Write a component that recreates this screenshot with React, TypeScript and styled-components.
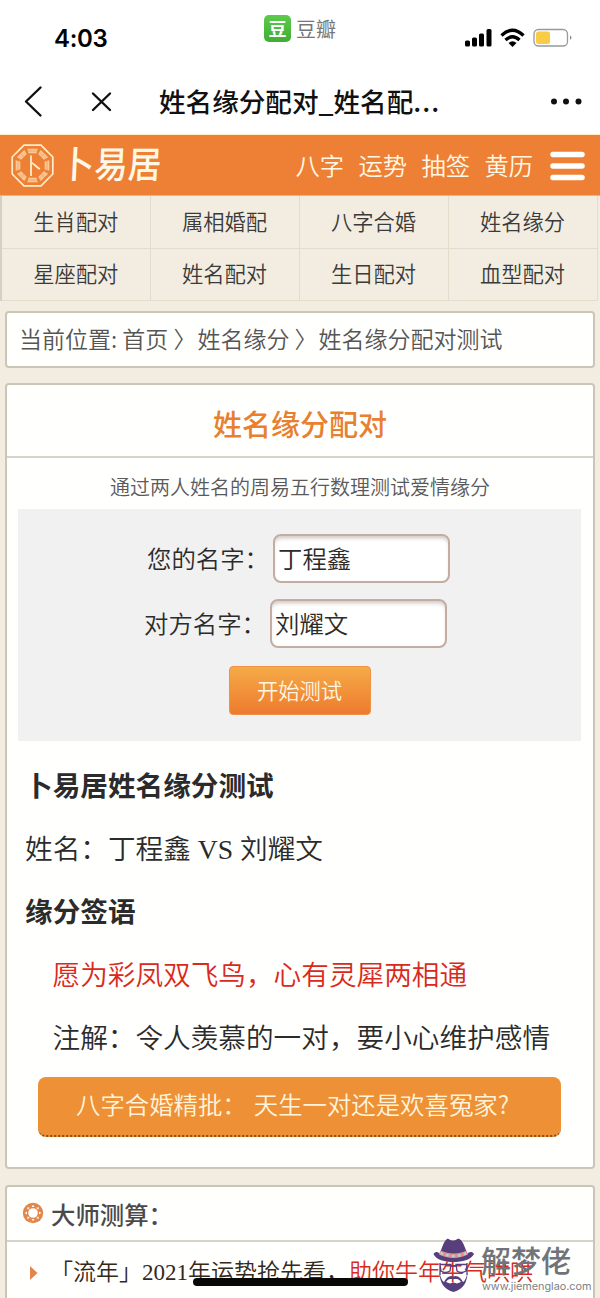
import React from "react";
import styled, { createGlobalStyle } from "styled-components";

const serif = `"Liberation Serif", "Noto Sans CJK SC", serif`;
const line = "#cbc5b8";

const Global = createGlobalStyle`
  * { box-sizing: border-box; }
  body { margin: 0; background: #f2ede0; font-family: "Noto Sans CJK SC", sans-serif; color: #2b2b2b; }
  h1, h2, p { margin: 0; }
`;

const Page = styled.div`
  position: relative;
  width: 600px;
  height: 1298px;
  overflow: hidden;
  white-space: nowrap;
`;

const StatusBar = styled.div`
  height: 68px;
  background: #fff;
  display: grid;
  grid-template-columns: 264px 1fr 136px;
`;
const Clock = styled.div`
  padding: 22px 0 0 54px;
  font: 600 24px/34px Inter, sans-serif;
  letter-spacing: -0.3px;
  color: #000;
`;
const AppTag = styled.div`
  display: flex;
  align-items: center;
  gap: 5px;
  height: 57px;
  font-size: 20px;
  color: #777;
`;
const AppBadge = styled.span`
  width: 27px;
  height: 27px;
  border-radius: 5px;
  background: linear-gradient(#5ccb4b, #40ad35);
  color: #fff;
  font-size: 18px;
  font-weight: 700;
  line-height: 26px;
  text-align: center;
`;
const StatusIcons = styled.svg`
  margin-top: 26px;
`;

const TitleBar = styled.div`
  height: 67px;
  background: #fff;
  border-bottom: 1px solid #fdeec4;
  display: grid;
  grid-template-columns: 159px 1fr 50px;
  align-items: center;
  font-size: 26.6px;
  font-weight: 500;
  color: #111;
`;
const PageTitle = styled.div`
  line-height: 60px;
`;
const Ellipsis = styled.span`
  letter-spacing: 1px;
`;

const Header = styled.header`
  height: 61px;
  background: #ee8035;
  border-bottom: 1px solid #dcb596;
  display: flex;
  align-items: center;
  color: #fff8e6;
`;
const Emblem = styled.svg`
  margin-left: 11px;
  flex: none;
`;
const Brand = styled.div`
  width: 103px;
  margin-left: 7px;
  font-size: 33.5px;
  font-weight: 500;
  line-height: 54px;
  transform: translateY(-2px) skewX(-3deg) scaleY(1.1);
`;
const HeaderNav = styled.nav`
  margin-left: auto;
  display: flex;
  gap: 14.4px;
  font-size: 24.3px;
  font-weight: 350;
  line-height: 60px;
`;
const MenuLines = styled.svg`
  margin: 2px 15px 0 17px;
`;

const LinkGrid = styled.div`
  width: 598px;
  height: 105px;
  display: grid;
  grid-template-columns: 148.5px 149px 149px 149px;
  grid-template-rows: 53px 52px;
  border-left: 2px solid #d6d0c3;
`;
const GridLink = styled.a`
  display: flex;
  align-items: center;
  justify-content: center;
  padding: 0 0 4px 0;
  border-right: 1px solid #e2dccb;
  border-bottom: 1px solid #e2dccb;
  font-size: 21.3px;
  font-weight: 350;
  color: #3a3a3a;
`;

const Card = styled.section<{ $h: number; $gap: number }>`
  height: ${(p) => p.$h}px;
  margin: ${(p) => p.$gap}px 5px 0;
  background: #fffffe;
  border: 2px solid ${line};
  border-radius: 4px;
`;
const Crumbs = styled.div`
  padding-left: 12px;
  font-size: 23px;
  font-weight: 350;
  line-height: 50px;
  color: #555;
`;
const Crumb = styled.span`
  margin-left: 1px;
`;
const CardTitle = styled.h1`
  height: 73px;
  border-bottom: 2px solid #d6d3cb;
  font-size: 29px;
  font-weight: 500;
  line-height: 77px;
  text-align: center;
  color: #e8802f;
`;
const Intro = styled.p`
  height: 51px;
  font-size: 20px;
  font-weight: 350;
  line-height: 57px;
  text-align: center;
  color: #5a5a5a;
`;
const FormPanel = styled.form`
  height: 232px;
  margin: 0 12px 0 11px;
  padding-top: 25px;
  background: #f1f1f1;
  display: flex;
  flex-direction: column;
  align-items: center;
`;
const Field = styled.label<{ $shift: number }>`
  height: 49px;
  margin-bottom: 16px;
  margin-right: ${(p) => p.$shift}px;
  display: flex;
  align-items: center;
  font-size: 24.4px;
  font-weight: 350;
`;
const FieldLabel = styled.span`
  width: 126px;
  margin-left: 1px;
  padding-bottom: 2px;
  line-height: 46px;
`;
const NameInput = styled.input`
  width: 177px;
  height: 49px;
  padding: 0 3px 3px;
  border: 2px solid #c4aca0;
  border-radius: 8px;
  background: #fff;
  box-shadow: inset 0 4px 4px -2px #c9c6c2;
  outline: 0;
  font: 350 24.4px "Noto Sans CJK SC", sans-serif;
  color: #2b2b2b;
`;
const Submit = styled.button`
  width: 142px;
  height: 49px;
  margin: 2px 0 0;
  padding: 0 0 3px;
  border: 1px solid #ee9248;
  border-radius: 4px;
  background: linear-gradient(#f5aa47, #ee7b2e);
  font: 350 21.3px "Noto Sans CJK SC", sans-serif;
  color: #fff6e2;
`;

const Result = styled.div`
  padding: 12px 0 0 18px;
  font-family: ${serif};
  font-size: 27.65px;
  line-height: 63px;
`;
const ResultHeading = styled.h2`
  height: 63px;
  font-size: 27.65px;
  font-weight: 600;
  font-family: "Noto Sans CJK SC", sans-serif;
`;
const ResultText = styled.p<{ $indent?: boolean; $red?: boolean }>`
  height: 63px;
  padding-left: ${(p) => (p.$indent ? 27.5 : 0)}px;
  font-weight: 350;
  line-height: 67px;
  color: ${(p) => (p.$red ? "#d92a20" : "#2b2b2b")};
`;
const Promo = styled.a`
  display: block;
  width: 523px;
  height: 60px;
  margin: 9px 0 0 31px;
  padding-left: 38px;
  border-bottom: 2px dotted #8f4d13;
  border-radius: 8px;
  background: #ee9036;
  font-size: 24.4px;
  font-weight: 350;
  line-height: 54px;
  color: #fff4da;
`;
const PromoTail = styled.span`
  margin-left: 7px;
`;

const ListHeading = styled.h2`
  height: 55px;
  padding: 0 0 1px 15px;
  border-bottom: 2px solid #d6d3cb;
  display: flex;
  align-items: center;
  gap: 7px;
  font-size: 24.4px;
  font-weight: 500;
  color: #4a4a4a;
`;
const ListRow = styled.div`
  height: 62px;
  padding-left: 23px;
  display: flex;
  align-items: center;
  gap: 12px;
  font-family: ${serif};
  font-size: 23px;
  font-weight: 350;
  color: #33291c;
`;
const ListText = styled.span`
  padding-bottom: 6px;
`;
const Red = styled.span`
  color: #d92a20;
`;

const HomeBar = styled.div`
  position: absolute;
  left: 193px;
  top: 1278px;
  width: 215px;
  height: 8px;
  border-radius: 4px;
  background: #080808;
`;
const Watermark = styled.div`
  position: absolute;
  left: 433px;
  top: 1237px;
  display: flex;
  gap: 6px;
  color: #70747a;
`;
const WatermarkText = styled.div`
  padding-top: 6px;
`;
const WatermarkName = styled.div`
  height: 37px;
  font-size: 30px;
  font-weight: 500;
  line-height: 33px;
`;
const WatermarkUrl = styled.div`
  padding-left: 1px;
  font: 10.8px/13px Inter, sans-serif;
  color: #7d8084;
`;

const links = ["生肖配对", "属相婚配", "八字合婚", "姓名缘分", "星座配对", "姓名配对", "生日配对", "血型配对"];

const BackClose = () => (
  <svg width="159" height="66" fill="none" stroke="#111" strokeWidth="2.4" strokeLinecap="round" strokeLinejoin="round">
    <path d="M40.500 19.500 26 33.500 40.500 47.500M93 25.500 110 42M110 25.500 93 42" />
  </svg>
);

const Bagua = () => (
  <Emblem width="43" height="43" viewBox="-21.500 -21.500 43 43" fill="none" stroke="#ffeccb">
    <path d="M-8.500-20.300H8.500L20.300-8.500V8.500L8.500 20.300H-8.500L-20.300 8.500V-8.500Z" strokeWidth="1.7" />
    {[0, 45, 90, 135, 180, 225, 270, 315].map((a, i) => (
      <g key={a} transform={`rotate(${a})`}>
        <path d="M-5.200-16.800H5.200L4-12.200H-4Z" fill="#f9cf9f" stroke="none" />
        <path
          d={i % 2 ? "M0-17V-12M-4.800-15.200H4.800M-4.500-13.800H4.500" : "M-4.800-15.200H4.800M-4.500-13.800H4.500"}
          stroke="#ee8035"
          strokeWidth="0.350"
        />
      </g>
    ))}
    <path d="M-1.500-10V10.500M-1.500-3C2-1.500 4 2 7.500 3.500" strokeWidth="1.800" />
  </Emblem>
);

const Gear = () => (
  <svg width="22" height="22" viewBox="-11 -11 22 22">
    <circle r="10.200" fill="#e2864a" />
    <circle r="4.800" fill="#fff" />
    {[0, 45, 90, 135, 180, 225, 270, 315].map((a) => (
      <path key={a} d="M-1.500-6 0-8.300 1.500-6Z" fill="#fff" transform={`rotate(${a})`} />
    ))}
  </svg>
);

const HatMan = () => (
  <svg width="42" height="56" viewBox="0 0 42 56">
    <path d="M6 18C9 12 10 5 14 2 16 1 17 4 20 3.500 23 4 24 1 26.500 2 31 5 32 12 35 18Z" fill="#573e7c" />
    <path d="M.5 17C3 14 5 15 7 17 15 21 26 21 34 17 36 15 39 14 41 17 38 23 29 25 20.500 25S3 23 .5 17Z" fill="#573e7c" />
    <path d="M7.500 13.500C16 17.500 26 17.500 33.500 13.500L35 17.500C26 22 15 22 6 17.500Z" fill="#ef8b8e" />
    <path d="M7.500 16C16 20 26 20 33.500 16" fill="none" stroke="#9be0d6" strokeWidth="2.500" strokeDasharray="2.500 3.500" />
    <path
      d="M7 27.500H18L17 34Q12 37 8 34ZM23 27.500H34L33 34Q28 37 24 34ZM18 29H23M7 26V38M34 26V38"
      fill="none"
      stroke="#573e7c"
      strokeWidth="1.300"
    />
    <path
      d="M6.500 36C7 45 10 52 20.500 55 31 52 34 45 34.500 36 33 41 32 44 30 45 28 41 24 37.500 20.500 39.500 17 37.500 13 41 11 45 9 44 8 41 6.500 36ZM13 45C15 41 19 42 20.500 42S26 41 28 45L24 46.500 20.500 45.500 17 46.500Z"
      fill="#573e7c"
      fillRule="evenodd"
    />
  </svg>
);

export default function App() {
  return (
    <Page>
      <Global />
      <StatusBar>
        <Clock>4:03</Clock>
        <AppTag>
          <AppBadge>豆</AppBadge>豆瓣
        </AppTag>
        <StatusIcons width="120" height="24" viewBox="464 26 120 24">
          <g fill="#000">
            <rect x="465" y="40.500" width="5" height="6" rx="1.500" />
            <rect x="472" y="37.500" width="5" height="9" rx="1.500" />
            <rect x="479" y="33.500" width="5" height="13" rx="1.500" />
            <rect x="486.500" y="29" width="5" height="17.500" rx="1.500" />
            <path d="M512.500 47 508.500 43Q512.500 39.500 516.500 43Z" />
          </g>
          <g fill="none" stroke="#000" strokeWidth="3.300">
            <path d="M501.500 35.500Q512.500 25 523.500 35.500" />
            <path d="M505.500 40Q512.500 33.500 519.500 40" />
          </g>
          <rect x="534" y="29.500" width="33.500" height="16.500" rx="4.500" fill="#fff" stroke="#999" strokeWidth="1.300" />
          <rect x="536" y="31.500" width="14" height="12.500" rx="2.500" fill="#f8cc45" />
          <path d="M570 35.500Q573 37.700 570 40Z" fill="#888" />
        </StatusIcons>
      </StatusBar>
      <TitleBar>
        <BackClose />
        <PageTitle>
          姓名缘分配对_姓名配<Ellipsis>...</Ellipsis>
        </PageTitle>
        <svg width="50" height="66">
          <g fill="#111">
            <circle cx="4" cy="33.500" r="3" />
            <circle cx="16" cy="33.500" r="3" />
            <circle cx="28.500" cy="33.500" r="3" />
          </g>
        </svg>
      </TitleBar>
      <Header>
        <Bagua />
        <Brand>卜易居</Brand>
        <HeaderNav>
          <span>八字</span>
          <span>运势</span>
          <span>抽签</span>
          <span>黄历</span>
        </HeaderNav>
        <MenuLines width="35" height="30" stroke="#fff" strokeWidth="5.500" strokeLinecap="round">
          <path d="M3 3.500H32M3 15H32M3 26.500H32" />
        </MenuLines>
      </Header>
      <LinkGrid>
        {links.map((t) => (
          <GridLink key={t}>{t}</GridLink>
        ))}
      </LinkGrid>
      <Card $h={57} $gap={10}>
        <Crumbs>
          当前位置: 首页 〉<Crumb>姓名缘分 〉</Crumb>
          <Crumb>姓名缘分配对测试</Crumb>
        </Crumbs>
      </Card>
      <Card $h={786} $gap={15}>
        <CardTitle>姓名缘分配对</CardTitle>
        <Intro>通过两人姓名的周易五行数理测试爱情缘分</Intro>
        <FormPanel>
          <Field $shift={3}>
            <FieldLabel>您的名字：</FieldLabel>
            <NameInput defaultValue="丁程鑫" />
          </Field>
          <Field $shift={9}>
            <FieldLabel>对方名字：</FieldLabel>
            <NameInput defaultValue="刘耀文" />
          </Field>
          <Submit type="button">开始测试</Submit>
        </FormPanel>
        <Result>
          <ResultHeading>卜易居姓名缘分测试</ResultHeading>
          <ResultText>姓名：丁程鑫 VS 刘耀文</ResultText>
          <ResultHeading>缘分签语</ResultHeading>
          <ResultText $indent $red>
            愿为彩凤双飞鸟，心有灵犀两相通
          </ResultText>
          <ResultText $indent>注解：令人羡慕的一对，要小心维护感情</ResultText>
        </Result>
        <Promo>
          八字合婚精批：<PromoTail>天生一对还是欢喜冤家?</PromoTail>
        </Promo>
      </Card>
      <Card $h={130} $gap={16}>
        <ListHeading>
          <Gear />
          大师测算：
        </ListHeading>
        <ListRow>
          <svg width="8" height="14">
            <path d="M0 0 7.500 7 0 14Z" fill="#e2864a" />
          </svg>
          <ListText>
            「流年」2021年运势抢先看，<Red>助你牛年牛气哄哄</Red>
          </ListText>
        </ListRow>
      </Card>
      <HomeBar />
      <Watermark>
        <HatMan />
        <WatermarkText>
          <WatermarkName>解梦佬</WatermarkName>
          <WatermarkUrl>www.jiemenglao.com</WatermarkUrl>
        </WatermarkText>
      </Watermark>
    </Page>
  );
}
